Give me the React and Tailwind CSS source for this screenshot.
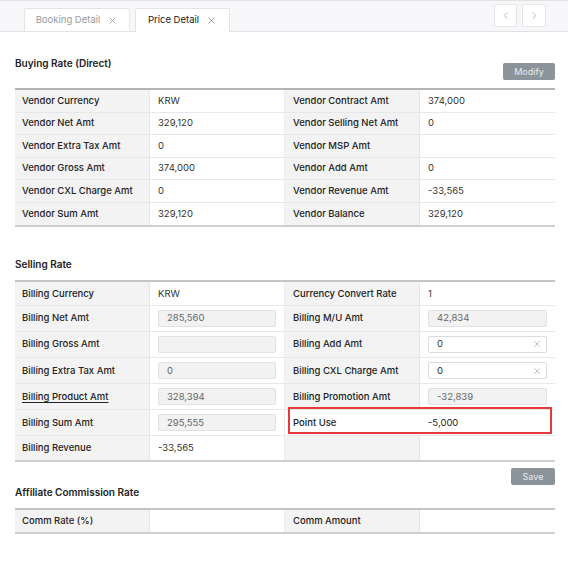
import { X, ChevronLeft, ChevronRight } from "lucide-react";

const buying = [
  ["Vendor Currency", "KRW", "Vendor Contract Amt", "374,000"],
  ["Vendor Net Amt", "329,120", "Vendor Selling Net Amt", "0"],
  ["Vendor Extra Tax Amt", "0", "Vendor MSP Amt", ""],
  ["Vendor Gross Amt", "374,000", "Vendor Add Amt", "0"],
  ["Vendor CXL Charge Amt", "0", "Vendor Revenue Amt", "-33,565"],
  ["Vendor Sum Amt", "329,120", "Vendor Balance", "329,120"],
];

function Label({ children, className = "" }) {
  return (
    <div className={`flex items-center bg-[#f3f3f3] border-r border-[#e6e6e6] px-[7px] font-medium text-[#222] ${className}`}>
      {children}
    </div>
  );
}

function Value({ children, className = "" }) {
  return (
    <div className={`flex items-center border-r border-[#ececec] px-[8px] text-[#333] ${className}`}>
      {children}
    </div>
  );
}

function ReadInput({ value }) {
  return (
    <div className="flex h-[17px] w-full items-center rounded-[2px] border border-[#e2e2e2] bg-[#f2f2f2] px-[8px] text-[#666]">
      {value}
    </div>
  );
}

function EditInput({ value }) {
  return (
    <div className="flex h-[17px] w-full items-center justify-between rounded-[2px] border border-[#dcdcdc] bg-white pl-[8px] pr-[4px] text-[#333]">
      <span>{value}</span>
      <X className="h-[10px] w-[10px] text-[#bdbdbd]" strokeWidth={2.2} />
    </div>
  );
}

function Row({ children, h = "h-[22px]" }) {
  return <div className={`grid grid-cols-4 border-b border-[#e8e8e8] ${h}`}>{children}</div>;
}

export default function App() {
  return (
    <div className="min-h-screen bg-white text-[9.5px]" style={{ fontFamily: "Inter, 'Noto Sans', sans-serif" }}>
      {/* Tab bar */}
      <div className="flex h-[32px] items-end justify-between border-t border-b border-[#e2e2e4] bg-[#f7f7f9] pl-[24px] pr-[22px]">
        <div className="flex items-end gap-[5px]">
          <div className="mb-[-1px] flex h-[24px] w-[106px] items-center justify-center gap-[7px] rounded-t-[2px] border border-[#e4e4e6] bg-white text-[#9a9a9a]">
            <span>Booking Detail</span>
            <X className="h-[11px] w-[11px]" strokeWidth={1.6} />
          </div>
          <div className="mb-[-1px] flex h-[24px] w-[95px] items-center justify-center gap-[7px] rounded-t-[2px] border border-b-0 border-[#e4e4e6] bg-white text-[#222]">
            <span>Price Detail</span>
            <X className="h-[11px] w-[11px] text-[#777]" strokeWidth={1.6} />
          </div>
        </div>
        <div className="mb-[4px] flex gap-[5px]">
          <button className="flex h-[23px] w-[23px] items-center justify-center rounded-[2px] border border-[#e6e6e8] bg-white text-[#b0b0b0]">
            <ChevronLeft className="h-[11px] w-[11px]" strokeWidth={2} />
          </button>
          <button className="flex h-[23px] w-[24px] items-center justify-center rounded-[2px] border border-[#e6e6e8] bg-white text-[#b0b0b0]">
            <ChevronRight className="h-[11px] w-[11px]" strokeWidth={2} />
          </button>
        </div>
      </div>

      <div className="px-[15px] pr-[13px]">
        {/* Buying Rate */}
        <div className="mt-[24px] flex items-start justify-between">
          <div className="text-[10px] font-semibold leading-[14px] text-[#222]">Buying Rate (Direct)</div>
          <button className="mt-[7px] h-[17px] w-[52px] rounded-[2px] bg-[#8b939b] text-[9px] text-[#e9ecef]">Modify</button>
        </div>
        <div className="mt-[8px] border-t-2 border-b-2 border-t-[#b4b4b4] border-b-[#cfcfcf]">
          {buying.map((r, i) => (
            <Row key={i} h={i === buying.length - 1 ? "h-[22.5px] border-b-0" : "h-[22.6px]"}>
              <Label>{r[0]}</Label>
              <Value>{r[1]}</Value>
              <Label className="px-[8px]">{r[2]}</Label>
              <Value className="border-r-0">{r[3]}</Value>
            </Row>
          ))}
        </div>

        {/* Selling Rate */}
        <div className="mt-[30px] text-[10px] font-semibold leading-[14px] text-[#222]">Selling Rate</div>
        <div className="mt-[9px] border-t-2 border-b-2 border-t-[#c4c4c4] border-b-[#cfcfcf]">
          <Row h="h-[23.5px]">
            <Label>Billing Currency</Label>
            <Value>KRW</Value>
            <Label className="px-[8px]">Currency Convert Rate</Label>
            <Value className="border-r-0">1</Value>
          </Row>
          <Row h="h-[26px]">
            <Label>Billing Net Amt</Label>
            <Value><ReadInput value="285,560" /></Value>
            <Label className="px-[8px]">Billing M/U Amt</Label>
            <Value className="border-r-0"><ReadInput value="42,834" /></Value>
          </Row>
          <Row h="h-[26px]">
            <Label>Billing Gross Amt</Label>
            <Value><ReadInput value="" /></Value>
            <Label className="px-[8px]">Billing Add Amt</Label>
            <Value className="border-r-0"><EditInput value="0" /></Value>
          </Row>
          <Row h="h-[26.5px]">
            <Label>Billing Extra Tax Amt</Label>
            <Value><ReadInput value="0" /></Value>
            <Label className="px-[8px]">Billing CXL Charge Amt</Label>
            <Value className="border-r-0"><EditInput value="0" /></Value>
          </Row>
          <Row h="h-[26px]">
            <Label><span className="underline underline-offset-[2px]">Billing Product Amt</span></Label>
            <Value><ReadInput value="328,394" /></Value>
            <Label className="px-[8px]">Billing Promotion Amt</Label>
            <Value className="border-r-0"><ReadInput value="-32,839" /></Value>
          </Row>
          <Row h="h-[26px]">
            <Label>Billing Sum Amt</Label>
            <Value><ReadInput value="295,555" /></Value>
            <div className="relative col-span-2 grid grid-cols-2">
              <div className="flex items-center px-[8px] font-medium text-[#222]">Point Use</div>
              <div className="flex items-center px-[8px] text-[#222]">-5,000</div>
              <span className="pointer-events-none absolute inset-x-[3px] top-[-3px] bottom-[1px] border-2 border-[#e5393d]" />
            </div>
          </Row>
          <Row h="h-[24px] border-b-0">
            <Label className="px-[6px]">Billing Revenue</Label>
            <Value>-33,565</Value>
            <Label className="px-[8px]"></Label>
            <Value className="border-r-0"></Value>
          </Row>
        </div>
        <div className="mt-[6px] flex justify-end">
          <button className="h-[17px] w-[44px] rounded-[2px] bg-[#8b939b] text-[9px] text-[#e9ecef]">Save</button>
        </div>

        {/* Affiliate */}
        <div className="mt-0 text-[10px] font-semibold leading-[14px] text-[#222]">Affiliate Commission Rate</div>
        <div className="mt-[9px] border-t-2 border-b-2 border-t-[#c4c4c4] border-b-[#cfcfcf]">
          <Row h="h-[22px] border-b-0">
            <Label>Comm Rate (%)</Label>
            <Value></Value>
            <Label className="px-[8px]">Comm Amount</Label>
            <Value className="border-r-0"></Value>
          </Row>
        </div>
      </div>
    </div>
  );
}
